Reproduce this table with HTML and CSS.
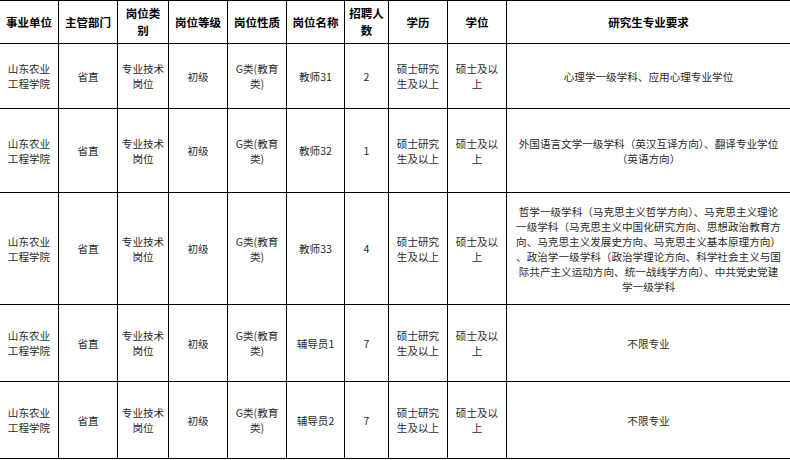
FILE: index.html
```html
<!DOCTYPE html>
<html lang="zh-CN">
<head>
<meta charset="utf-8">
<title>岗位表</title>
<link rel="stylesheet" href="styles.css">
</head>
<body>
<div class="sheet">
  <div class="cell head">事业单位</div>
  <div class="cell head">主管部门</div>
  <div class="cell head">岗位类<br>别</div>
  <div class="cell head">岗位等级</div>
  <div class="cell head">岗位性质</div>
  <div class="cell head">岗位名称</div>
  <div class="cell head">招聘人<br>数</div>
  <div class="cell head">学历</div>
  <div class="cell head">学位</div>
  <div class="cell head">研究生专业要求</div>

  <div class="cell">山东农业<br>工程学院</div>
  <div class="cell">省直</div>
  <div class="cell">专业技术<br>岗位</div>
  <div class="cell">初级</div>
  <div class="cell">G类(教育<br>类)</div>
  <div class="cell">教师31</div>
  <div class="cell">2</div>
  <div class="cell">硕士研究<br>生及以上</div>
  <div class="cell">硕士及以<br>上</div>
  <div class="cell">心理学一级学科、应用心理专业学位</div>

  <div class="cell">山东农业<br>工程学院</div>
  <div class="cell">省直</div>
  <div class="cell">专业技术<br>岗位</div>
  <div class="cell">初级</div>
  <div class="cell">G类(教育<br>类)</div>
  <div class="cell">教师32</div>
  <div class="cell">1</div>
  <div class="cell">硕士研究<br>生及以上</div>
  <div class="cell">硕士及以<br>上</div>
  <div class="cell">外国语言文学一级学科（英汉互译方向）、翻译专业学位<br>（英语方向）</div>

  <div class="cell">山东农业<br>工程学院</div>
  <div class="cell">省直</div>
  <div class="cell">专业技术<br>岗位</div>
  <div class="cell">初级</div>
  <div class="cell">G类(教育<br>类)</div>
  <div class="cell">教师33</div>
  <div class="cell">4</div>
  <div class="cell">硕士研究<br>生及以上</div>
  <div class="cell">硕士及以<br>上</div>
  <div class="cell">哲学一级学科（马克思主义哲学方向）、马克思主义理论<br>一级学科（马克思主义中国化研究方向、思想政治教育方<br>向、马克思主义发展史方向、马克思主义基本原理方向）<br>、政治学一级学科（政治学理论方向、科学社会主义与国<br>际共产主义运动方向、统一战线学方向）、中共党史党建<br>学一级学科</div>

  <div class="cell">山东农业<br>工程学院</div>
  <div class="cell">省直</div>
  <div class="cell">专业技术<br>岗位</div>
  <div class="cell">初级</div>
  <div class="cell">G类(教育<br>类)</div>
  <div class="cell">辅导员1</div>
  <div class="cell">7</div>
  <div class="cell">硕士研究<br>生及以上</div>
  <div class="cell">硕士及以<br>上</div>
  <div class="cell">不限专业</div>

  <div class="cell">山东农业<br>工程学院</div>
  <div class="cell">省直</div>
  <div class="cell">专业技术<br>岗位</div>
  <div class="cell">初级</div>
  <div class="cell">G类(教育<br>类)</div>
  <div class="cell">辅导员2</div>
  <div class="cell">7</div>
  <div class="cell">硕士研究<br>生及以上</div>
  <div class="cell">硕士及以<br>上</div>
  <div class="cell">不限专业</div>
</div>
</body>
</html>
```

FILE: styles.css
```css
html, body {
  margin: 0;
  padding: 0;
  background: #ffffff;
}

.sheet {
  display: grid;
  grid-template-columns: 58px 58px 50px 58px 58px 57px 43px 58px 58px 283px;
  grid-template-rows: 42px 64px 83px 111px 76px 76px;
  gap: 1px;
  padding: 1px 0;
  background: #000000;
  width: 790px;
  font-family: "Noto Sans CJK SC", "Noto Sans", sans-serif;
}

.cell {
  background: #ffffff;
  display: flex;
  align-items: center;
  justify-content: center;
  text-align: center;
  font-size: 10.6px;
  line-height: 15px;
  color: #2a2a2a;
  overflow: hidden;
  white-space: nowrap;
}

.head {
  font-weight: bold;
  font-size: 11.5px;
  line-height: 17px;
  color: #000000;
}
```
